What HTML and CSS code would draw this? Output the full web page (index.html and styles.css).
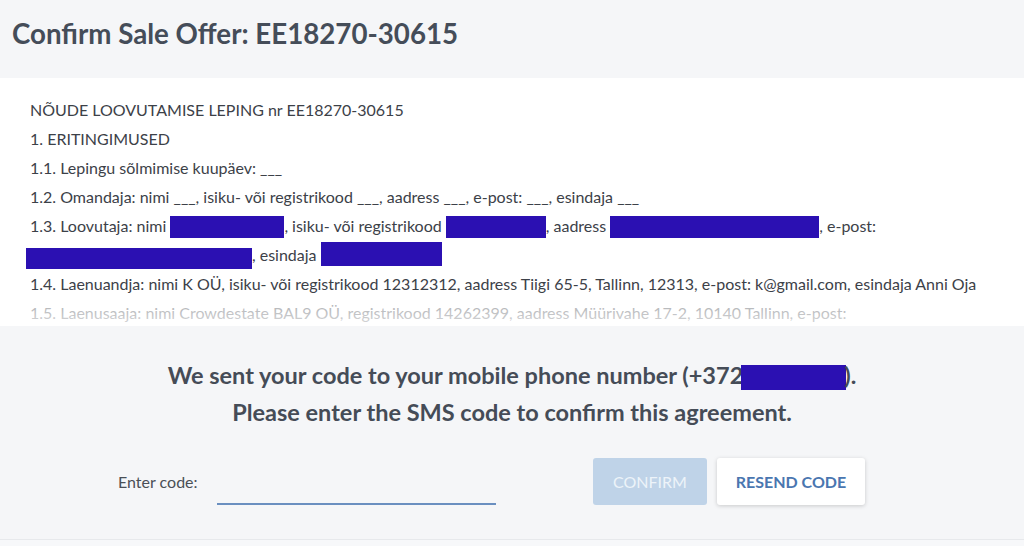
FILE: index.html
```html
<!DOCTYPE html>
<html lang="en">
<head>
<meta charset="utf-8">
<title>Confirm Sale Offer</title>
<link rel="stylesheet" href="styles.css">
</head>
<body>
<div class="page">
  <header class="top">
    <h1 class="title">Confirm Sale Offer: EE18270-30615</h1>
  </header>
  <section class="contract">
    <div class="contract-text">
      <p>NÕUDE LOOVUTAMISE LEPING nr EE18270-30615</p>
      <p>1. ERITINGIMUSED</p>
      <p>1.1. Lepingu sõlmimise kuupäev: ___</p>
      <p>1.2. Omandaja: nimi ___, isiku- või registrikood ___, aadress ___, e-post: ___, esindaja ___</p>
      <p>1.3. Loovutaja: nimi <span class="redact r-name"></span>, isiku- või registrikood <span class="redact r-code"></span>, aadress <span class="redact r-addr"></span>, e-post: <span class="redact r-mail"></span>, esindaja <span class="redact r-rep"></span></p>
      <p>1.4. Laenuandja: nimi K OÜ, isiku- või registrikood 12312312, aadress Tiigi 65-5, Tallinn, 12313, e-post: k@gmail.com, esindaja Anni Oja</p>
      <p>1.5. Laenusaaja: nimi Crowdestate BAL9 OÜ, registrikood 14262399, aadress Müürivahe 17-2, 10140 Tallinn, e-post:</p>
    </div>
  </section>
  <section class="confirm">
    <p class="msg">We sent your code to your mobile phone number (+372<span class="redact r-phone"></span>).</p>
    <p class="msg">Please enter the SMS code to confirm this agreement.</p>
    <form class="code-row">
      <label class="code-label" for="code">Enter code:</label>
      <input class="code-input" id="code" type="text">
      <button class="btn btn-confirm" type="button">CONFIRM</button>
      <button class="btn btn-resend" type="button">RESEND CODE</button>
    </form>
  </section>
</div>
</body>
</html>
```

FILE: styles.css
```css
* { box-sizing: border-box; }
html, body { margin: 0; padding: 0; }
body {
  font-family: Lato, "Open Sans", "Liberation Sans", sans-serif;
  background: #f7f8fa;
  color: #3c4148;
}
.page { width: 1024px; height: 546px; overflow: hidden; }

.top {
  height: 78px;
  background: #f5f6f8;
  padding: 18px 0 0 12px;
}
.title {
  margin: 0;
  font-size: 27.7px;
  line-height: 32px;
  font-weight: 700;
  color: #454d59;
}

.contract {
  position: relative;
  height: 248px;
  background: #ffffff;
  overflow: hidden;
}
.contract::after {
  content: "";
  position: absolute;
  left: 0; right: 0; bottom: 0;
  height: 28px;
  background: linear-gradient(rgba(255,255,255,0.55), rgba(255,255,255,0.8));
}
.contract-text {
  padding: 17px 40px 0 30px;
  font-size: 16px;
  line-height: 29px;
}
.contract-text p { margin: 0; }

.redact {
  display: inline-block;
  background: #2b10b2;
  vertical-align: -6px;
  height: 22px;
}
.r-name { width: 114px; }
.r-code { width: 100px; }
.r-addr { width: 209px; }
.r-mail { width: 226px; height: 21px; margin-left: -4px; vertical-align: -8px; }
.r-rep { width: 121px; height: 24px; vertical-align: -5px; }
.r-phone { width: 105px; height: 25px; vertical-align: -6px; margin-left: -2px; margin-right: -2px; }

.confirm {
  height: 214px;
  background: #f5f6f8;
  border-bottom: 1px solid #e7e9ec;
  padding-top: 31px;
}
.msg {
  margin: 0;
  text-align: center;
  font-size: 23.5px;
  line-height: 37px;
  font-weight: 700;
  color: #454c57;
}
.code-row {
  display: flex;
  align-items: center;
  margin-top: 27px;
  padding-left: 118px;
}
.code-label {
  font-size: 16px;
  color: #4a4f56;
  width: 99px;
}
.code-input {
  width: 279px;
  height: 47px;
  border: 0;
  border-bottom: 2px solid #6a8fc0;
  background: transparent;
  font: inherit;
  outline: none;
  margin-right: 97px;
}
.btn {
  height: 47px;
  border: 0;
  border-radius: 3px;
  font-family: inherit;
  font-size: 16px;
  padding: 0;
  white-space: nowrap;
  cursor: pointer;
}
.btn-confirm {
  width: 114px;
  background: #bfd3e8;
  color: #edf3f9;
  margin-right: 10px;
}
.btn-resend {
  width: 148px;
  background: #ffffff;
  color: #4a76b0;
  font-weight: 700;
  box-shadow: 0 1px 4px rgba(0,0,0,0.18);
}
```
